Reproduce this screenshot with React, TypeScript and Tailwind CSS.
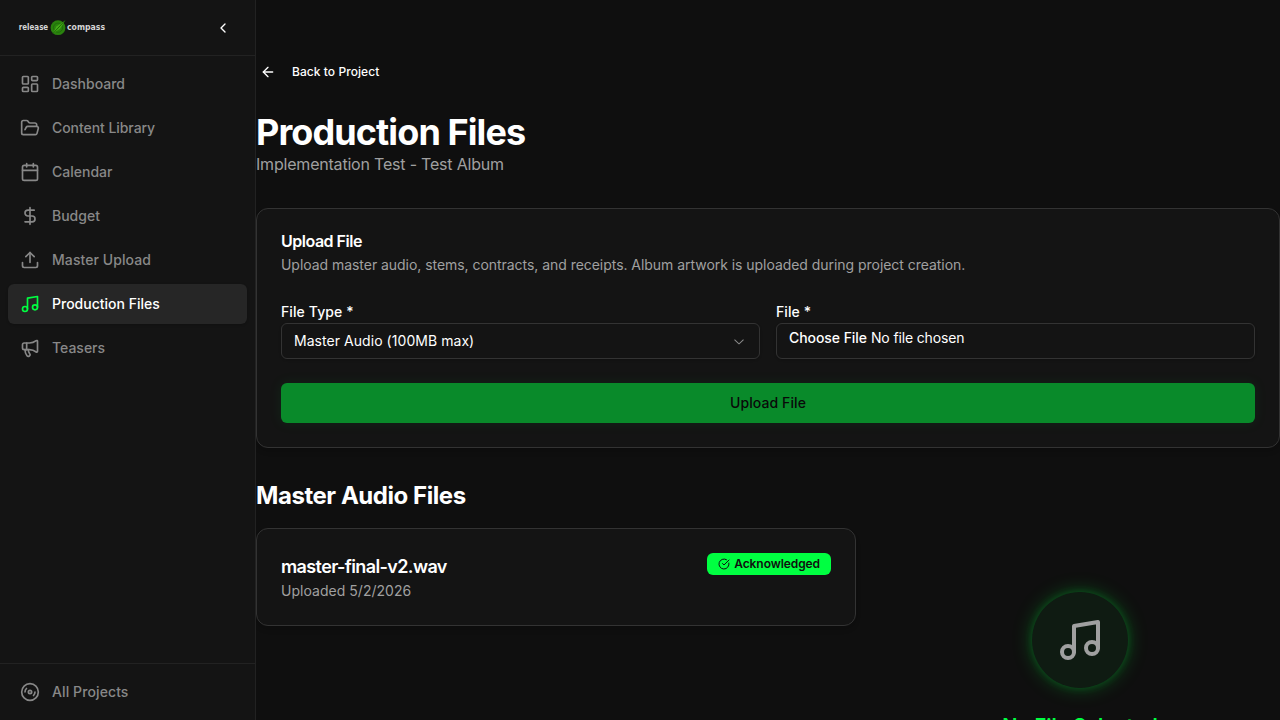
import {
  ArrowLeft,
  Calendar,
  ChevronLeft,
  CircleCheckBig,
  Disc3,
  DollarSign,
  FolderOpen,
  LayoutDashboard,
  Megaphone,
  Music,
  Upload,
  type LucideIcon,
} from "lucide-react";

type NavItem = { label: string; icon: LucideIcon; active?: boolean; spacing?: string };

const NAV: NavItem[] = [
  { label: "Dashboard", icon: LayoutDashboard },
  { label: "Content Library", icon: FolderOpen, spacing: "tracking-[-0.06px]" },
  { label: "Calendar", icon: Calendar },
  { label: "Budget", icon: DollarSign },
  { label: "Master Upload", icon: Upload, spacing: "tracking-[0.08px]" },
  { label: "Production Files", icon: Music, active: true },
  { label: "Teasers", icon: Megaphone },
];

function NavLink({ label, icon: Icon, active, spacing }: NavItem) {
  return (
    <a
      className={
        active
          ? "flex h-10 items-center gap-3 rounded-md bg-[#262626] px-3 text-sm font-medium text-white shadow-sm"
          : "flex h-10 items-center gap-3 rounded-md px-3 text-sm font-medium text-[#888888]"
      }
    >
      <Icon size={20} className={active ? "text-[#00ff41]" : "text-[#888888]"} />
      <span className={spacing}>{label}</span>
    </a>
  );
}

function Logo() {
  return (
    <svg width="96" height="16" viewBox="0 0 96 16" className="block">
      <g fill="#d6d6d6" fontFamily="'DejaVu Sans', sans-serif" fontSize="8.4" fontWeight="700">
        <text x="0.8" y="10.4" textLength="29.4" lengthAdjust="spacingAndGlyphs">release</text>
        <text x="49" y="10.4" textLength="38" lengthAdjust="spacingAndGlyphs">compass</text>
      </g>
      <circle cx="40" cy="7.7" r="7.4" fill="#2a820e" />
      <circle cx="40" cy="7.7" r="4.6" fill="none" stroke="#1c6408" strokeWidth="0.7" />
      <path d="M47.2 0.4 42 8.8 34.8 13.6 38.4 6.4Z" fill="#44ad18" />
      <path d="M47.2 0.4 34.8 13.6" stroke="#175205" strokeWidth="0.8" />
    </svg>
  );
}

function SelectChevron() {
  return (
    <svg width="16" height="16" viewBox="0 0 15 15" fill="currentColor" className="opacity-50">
      <path
        fillRule="evenodd"
        clipRule="evenodd"
        d="M3.13523 6.15803C3.3241 5.95657 3.64052 5.94637 3.84197 6.13523L7.5 9.56464L11.158 6.13523C11.3595 5.94637 11.6759 5.95657 11.8648 6.15803C12.0536 6.35949 12.0434 6.67591 11.842 6.86477L7.84197 10.6148C7.64964 10.7951 7.35036 10.7951 7.15803 10.6148L3.15803 6.86477C2.95657 6.67591 2.94637 6.35949 3.13523 6.15803Z"
      />
    </svg>
  );
}

function Sidebar() {
  return (
    <aside className="flex w-64 shrink-0 flex-col border-r border-[#222222] bg-[#141414]">
      <div className="flex h-14 items-center justify-between border-b border-[#222222] pr-6 pl-[18px]">
        <Logo />
        <ChevronLeft size={16} className="mt-px text-white" />
      </div>
      <nav className="flex flex-1 flex-col gap-1 p-2">
        {NAV.map((item) => (
          <NavLink key={item.label} {...item} />
        ))}
      </nav>
      <div className="border-t border-[#222222] p-2">
        <NavLink label="All Projects" icon={Disc3} spacing="tracking-[0.1px]" />
      </div>
    </aside>
  );
}

function UploadCard() {
  return (
    <section className="mt-8 rounded-xl border border-[#333333] bg-[#141414] p-6 shadow-md">
      <h3 className="text-base leading-4 font-semibold tracking-[-0.49px]">Upload File</h3>
      <p className="mt-1.5 text-sm tracking-[-0.043px] text-[#a0a0a0]">
        Upload master audio, stems, contracts, and receipts. Album artwork is uploaded during project creation.
      </p>
      <div className="mt-6 grid grid-cols-2 gap-4">
        <div>
          <div className="h-6 text-sm leading-[26px] font-medium tracking-[0.1px]">File Type *</div>
          <div className="flex h-9 items-center justify-between rounded-md border border-[#333333] px-3 text-sm shadow-sm">
            <span className="tracking-[0.05px]">Master Audio (100MB max)</span>
            <SelectChevron />
          </div>
        </div>
        <div>
          <div className="h-6 text-sm leading-[26px] font-medium tracking-[0.1px]">File *</div>
          <div className="flex h-9 gap-1 rounded-md border border-[#333333] px-3 pt-1 text-sm shadow-sm">
            <span className="font-medium tracking-[-0.06px]">Choose File</span>
            <span className="tracking-[-0.15px]">No file chosen</span>
          </div>
        </div>
      </div>
      <button
        disabled
        className="mt-6 flex h-10 w-full items-center justify-center rounded-md bg-[#00ff41] text-sm font-medium tracking-[0.1px] text-black opacity-50 shadow-[0_0_12px_rgba(0,255,65,0.15)]"
      >
        Upload File
      </button>
    </section>
  );
}

function MasterFiles() {
  return (
    <div className="mt-4 grid grid-cols-[600px_400px] gap-6">
      <div className="flex h-[98px] items-start justify-between rounded-xl border border-[#333333] bg-[#141414] p-6 shadow-md">
        <div>
          <h4 className="text-lg leading-7 font-semibold tracking-[-0.62px]">master-final-v2.wav</h4>
          <p className="text-sm tracking-[0.03px] text-[#a0a0a0]">Uploaded 5/2/2026</p>
        </div>
        <span className="flex h-[22px] items-center gap-1 rounded-md bg-[#00ff41] px-[11px] text-xs font-semibold tracking-[-0.08px] text-[#0f0f0f]">
          <CircleCheckBig size={12} strokeWidth={2} />
          Acknowledged
        </span>
      </div>
      <div className="flex flex-col items-center pt-16">
        <div className="flex size-24 items-center justify-center rounded-full bg-[#0f1b12] shadow-[0_0_8px_rgba(0,255,65,0.2),0_0_20px_rgba(0,255,65,0.25)]">
          <Music size={48} className="text-[#a0a0a0]" />
        </div>
        <h3 className="mt-6 text-xl leading-7 font-semibold tracking-[-0.06px] text-[#00ff41]">No File Selected</h3>
      </div>
    </div>
  );
}

export default function App() {
  return (
    <div className="flex h-screen overflow-hidden bg-[#0f0f0f] font-['Inter',sans-serif] text-white">
      <Sidebar />
      <main className="min-w-0 flex-1 overflow-hidden pt-14">
        <a className="flex h-8 items-center gap-4 pl-1 text-xs font-medium tracking-[0.06px]">
          <ArrowLeft size={16} />
          Back to Project
        </a>
        <h1 className="mt-6 text-4xl leading-10 font-bold tracking-tight">Production Files</h1>
        <p className="text-base leading-6 tracking-[-0.2px] text-[#a0a0a0]">Implementation Test - Test Album</p>
        <UploadCard />
        <h2 className="mt-8 text-2xl leading-8 font-bold tracking-[-0.45px]">Master Audio Files</h2>
        <MasterFiles />
      </main>
    </div>
  );
}
